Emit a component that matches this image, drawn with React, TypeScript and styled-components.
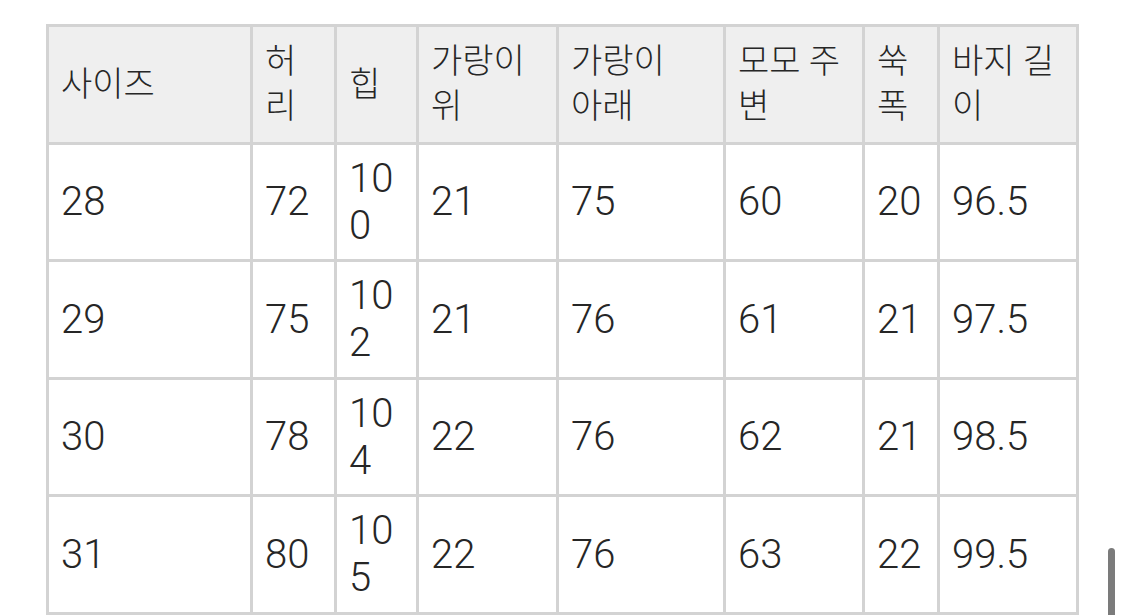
import React from "react";
import styled, { createGlobalStyle } from "styled-components";

const GlobalStyle = createGlobalStyle`
  html, body {
    margin: 0;
    padding: 0;
    background: #ffffff;
    overflow: hidden;
  }
  body {
    font-family: Roboto, "Noto Sans CJK KR", sans-serif;
    font-weight: 300;
    color: #262626;
  }
`;

const Page = styled.div`
  position: relative;
  height: 615px;
  padding: 24px 0 0 46px;
  box-sizing: border-box;
`;

const SizeTable = styled.table`
  border-collapse: collapse;
  table-layout: fixed;
  width: 1033px;
`;

const HeadCell = styled.th`
  background: #efefef;
  border: 3px solid #d3d3d3;
  padding: 0 12px;
  font-size: 34px;
  line-height: 45px;
  font-weight: 300;
  text-align: left;
  vertical-align: middle;
`;

const HeadLine = styled.span`
  display: block;
  white-space: nowrap;
`;

const Row = styled.tr`
  height: 117.5px;
`;

const Cell = styled.td`
  border: 3px solid #d3d3d3;
  padding: 0 12px;
  font-size: 40px;
  line-height: 47px;
  vertical-align: middle;
  word-break: break-all;
`;

const ScrollThumb = styled.div`
  position: absolute;
  right: 10px;
  top: 548px;
  width: 7px;
  height: 80px;
  border-radius: 4px;
  background: #7b7b7b;
`;

const columns: { width: number; label: string[] }[] = [
  { width: 204, label: ["사이즈"] },
  { width: 84, label: ["허", "리"] },
  { width: 82, label: ["힙"] },
  { width: 140, label: ["가랑이", "위"] },
  { width: 167, label: ["가랑이", "아래"] },
  { width: 139, label: ["모모 주", "변"] },
  { width: 75, label: ["쑥", "폭"] },
  { width: 139, label: ["바지 길", "이"] },
];

const rows = [
  ["28", "72", "100", "21", "75", "60", "20", "96.5"],
  ["29", "75", "102", "21", "76", "61", "21", "97.5"],
  ["30", "78", "104", "22", "76", "62", "21", "98.5"],
  ["31", "80", "105", "22", "76", "63", "22", "99.5"],
];

export default function App() {
  return (
    <>
      <GlobalStyle />
      <Page>
        <SizeTable>
          <colgroup>
            {columns.map((c, i) => (
              <col key={i} style={{ width: c.width }} />
            ))}
          </colgroup>
          <thead>
            <Row>
              {columns.map((c, i) => (
                <HeadCell key={i}>
                  {c.label.map((line, j) => (
                    <HeadLine key={j}>{line}</HeadLine>
                  ))}
                </HeadCell>
              ))}
            </Row>
          </thead>
          <tbody>
            {rows.map((r, i) => (
              <Row key={i}>
                {r.map((v, j) => (
                  <Cell key={j}>{v}</Cell>
                ))}
              </Row>
            ))}
          </tbody>
        </SizeTable>
        <ScrollThumb />
      </Page>
    </>
  );
}
